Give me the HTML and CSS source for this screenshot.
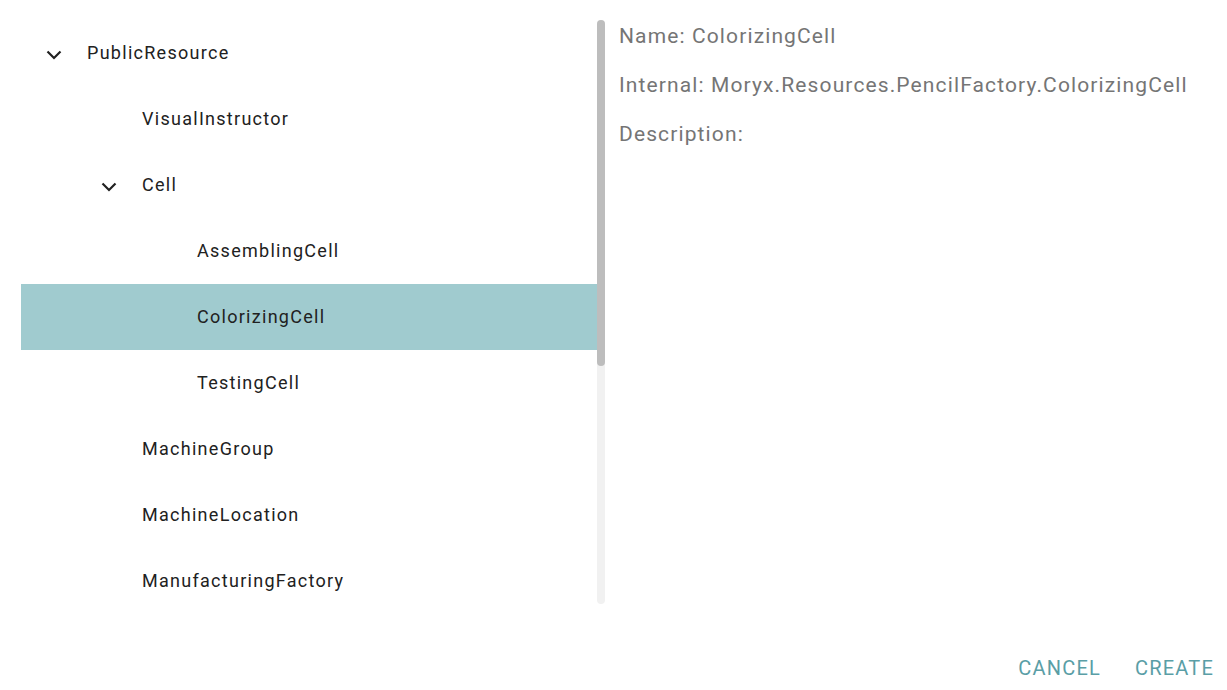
FILE: index.html
```html
<!DOCTYPE html>
<html>
<head>
<meta charset="utf-8">
<link rel="stylesheet" href="styles.css">
</head>
<body>
<div class="dialog">
  <div class="content">
    <div class="tree-wrap">
      <div class="tree">
        <div class="row lvl0"><span class="chev"><svg viewBox="0 0 16 10" width="16" height="10"><polyline points="1.5,1.5 8,8 14.5,1.5" fill="none" stroke="#212121" stroke-width="2.2"/></svg></span><span class="label">PublicResource</span></div>
        <div class="row lvl1"><span class="chev"></span><span class="label">VisualInstructor</span></div>
        <div class="row lvl1"><span class="chev"><svg viewBox="0 0 16 10" width="16" height="10"><polyline points="1.5,1.5 8,8 14.5,1.5" fill="none" stroke="#212121" stroke-width="2.2"/></svg></span><span class="label">Cell</span></div>
        <div class="row lvl2"><span class="chev"></span><span class="label">AssemblingCell</span></div>
        <div class="row lvl2 selected"><span class="chev"></span><span class="label">ColorizingCell</span></div>
        <div class="row lvl2"><span class="chev"></span><span class="label">TestingCell</span></div>
        <div class="row lvl1"><span class="chev"></span><span class="label">MachineGroup</span></div>
        <div class="row lvl1"><span class="chev"></span><span class="label">MachineLocation</span></div>
        <div class="row lvl1"><span class="chev"></span><span class="label">ManufacturingFactory</span></div>
      </div>
      <div class="scrollbar"><div class="thumb"></div></div>
    </div>
    <div class="details">
      <p>Name: ColorizingCell</p>
      <p>Internal: Moryx.Resources.PencilFactory.ColorizingCell</p>
      <p>Description:</p>
    </div>
  </div>
  <div class="actions">
    <button class="btn">CANCEL</button>
    <button class="btn">CREATE</button>
  </div>
</div>
</body>
</html>
```
FILE: styles.css
```css
html, body {
  margin: 0;
  padding: 0;
  background: #fff;
  font-family: Roboto, "Liberation Sans", sans-serif;
}
.dialog {
  width: 1227px;
  height: 690px;
  display: flex;
  flex-direction: column;
  overflow: hidden;
}
.content {
  display: flex;
  padding: 20px 0 0 21px;
  height: 584px;
}
.tree-wrap {
  display: flex;
  height: 584px;
  flex: none;
}
.tree {
  width: 576px;
  height: 584px;
  overflow: hidden;
}
.scrollbar {
  width: 8px;
  height: 584px;
  background: #f1f1f1;
  border-radius: 4px;
}
.thumb {
  height: 346px;
  background: #bdbdbd;
  border-radius: 4px;
}
.row {
  height: 66px;
  display: flex;
  align-items: center;
  font-size: 18px;
  letter-spacing: 1.28px;
  color: #212121;
}
.row.selected {
  background: #a0cbcf;
}
.chev {
  width: 16px;
  height: 10px;
  display: flex;
  margin-right: 25px;
  margin-top: 3px;
}
.lvl0 { padding-left: 25px; }
.lvl1 { padding-left: 80px; }
.lvl2 { padding-left: 135px; }
.label {
  white-space: nowrap;
  margin-bottom: 2px;
}
.details {
  padding-left: 14px;
  color: #757575;
  font-size: 21px;
  letter-spacing: 1.12px;
}
.details p {
  margin: 5px 0 25px 0;
  line-height: 24px;
  white-space: nowrap;
}
.details p:first-child {
  margin-top: 4px;
}
.actions {
  display: flex;
  justify-content: flex-end;
  padding: 46px 13px 0 0;
  gap: 34px;
}
.btn {
  background: none;
  border: none;
  font-family: Roboto, "Liberation Sans", sans-serif;
  font-size: 20px;
  letter-spacing: 1.2px;
  color: #5a9ea6;
  padding: 0;
  height: 36px;
}
```
